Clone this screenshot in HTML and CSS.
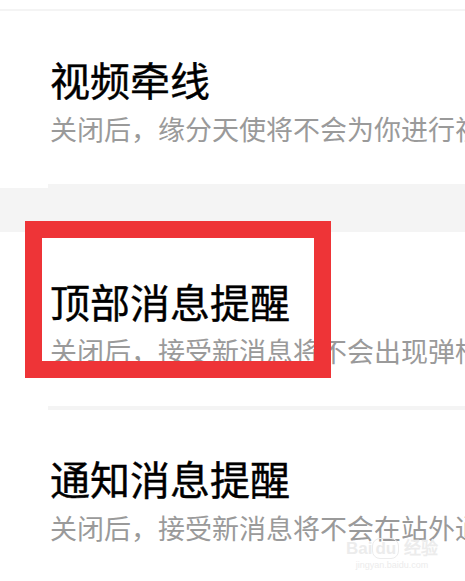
FILE: index.html
```html
<!DOCTYPE html>
<html lang="zh-CN">
<head>
    <meta charset="UTF-8">
    <meta name="viewport" content="width=device-width, initial-scale=1.0">
    <title>消息设置</title>
    <link rel="stylesheet" href="styles.css">
</head>
<body>
    <div class="page">
        <div class="top-line"></div>

        <div class="item">
            <div class="title">视频牵线</div>
            <div class="desc">关闭后，缘分天使将不会为你进行视频牵线</div>
        </div>
        <div class="divider"></div>
        <div class="gap"></div>

        <div class="item item-marked">
            <div class="title">顶部消息提醒</div>
            <div class="desc">关闭后，接受新消息将不会出现弹框提醒</div>
            <div class="mark"></div>
        </div>
        <div class="divider"></div>

        <div class="item">
            <div class="title">通知消息提醒</div>
            <div class="desc">关闭后，接受新消息将不会在站外通知</div>
        </div>

        <div class="watermark">
            <div class="wm-logo">Bai<span class="wm-du">du</span> 经验</div>
            <div class="wm-url">jingyan.baidu.com</div>
        </div>
    </div>
</body>
</html>
```

FILE: styles.css
```css
body {
    margin: 0;
    padding: 0;
    background: #ffffff;
    font-family: "Noto Sans CJK SC", "Noto Sans", sans-serif;
}
.page {
    position: relative;
    width: 465px;
    height: 581px;
    overflow: hidden;
}
.top-line {
    height: 2px;
    margin-top: 9px;
    background: #f4f4f4;
}
.item {
    position: relative;
    padding: 48px 0 0 50px;
    white-space: nowrap;
}
.item-marked {
    padding-top: 49px;
}
.title {
    font-size: 40px;
    line-height: 40px;
    color: #000000;
    -webkit-text-stroke: 0.4px #000000;
}
.desc {
    margin-top: 16px;
    font-size: 27px;
    line-height: 27px;
    color: #9a9a9a;
}
.divider {
    height: 4px;
    margin-left: 48px;
    margin-top: 42px;
    background: #f4f4f4;
}
.gap {
    height: 44px;
    background: #f4f4f4;
}
.mark {
    position: absolute;
    left: 25px;
    top: -11px;
    width: 272px;
    height: 123px;
    border: 17px solid #ee3437;
}
.watermark {
    position: absolute;
    left: 346px;
    top: 540px;
    color: #ececec;
    text-align: center;
}
.wm-logo {
    font-family: "Liberation Sans", sans-serif;
    font-size: 17px;
    font-weight: bold;
    line-height: 18px;
}
.wm-du {
    border: 1px solid #ececec;
    border-radius: 8px;
    padding: 0 2px;
}
.wm-url {
    font-family: "Liberation Sans", sans-serif;
    font-size: 9px;
    line-height: 14px;
}
```
